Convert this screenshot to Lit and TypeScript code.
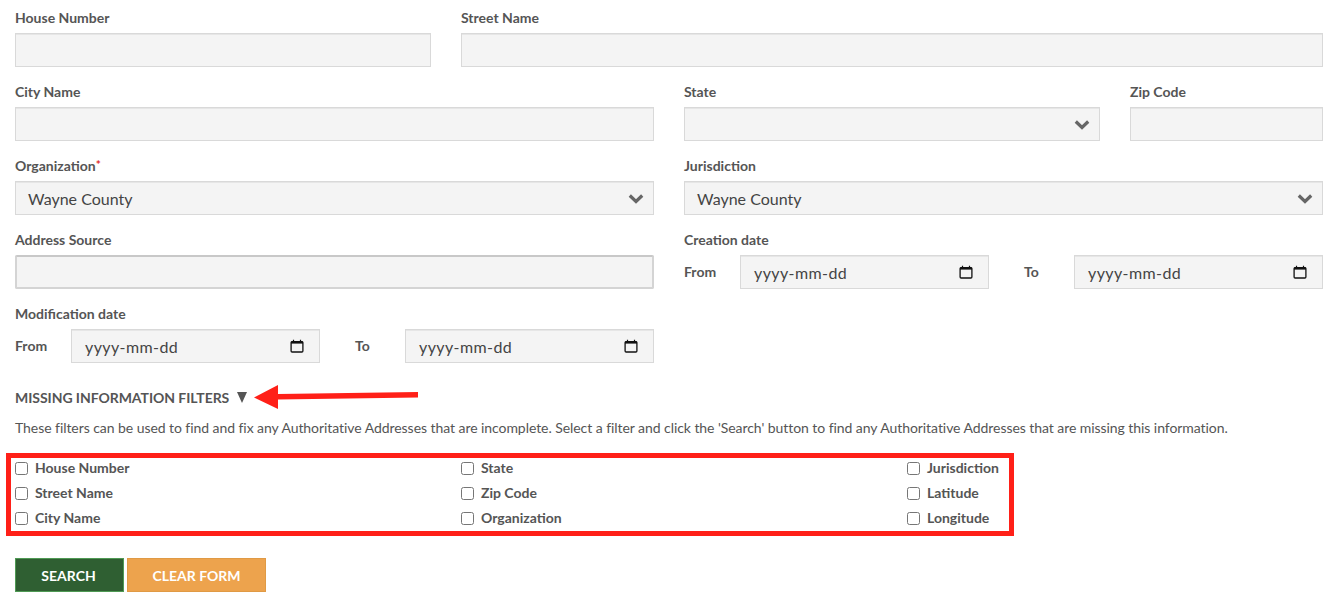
import { LitElement, html, css } from 'lit';
import { customElement } from 'lit/decorators.js';

const chevron = html`<svg class="chevron" width="16" height="11" viewBox="0 0 16 11">
  <path d="M1.8 2.5 L8 8.5 L14.2 2.5" fill="none" stroke="#666" stroke-width="3.2"/>
</svg>`;

const calendar = html`<svg class="cal" width="14" height="14" viewBox="0 0 14 14">
  <rect x="1.1" y="2.6" width="11.8" height="10.4" rx="1" fill="none" stroke="#111" stroke-width="1.3"/>
  <path d="M1 2.4 H13 V4.6 H1 Z" fill="#111"/>
  <path d="M3.5 .8 V3 M10.5 .8 V3" stroke="#111" stroke-width="1.2"/>
</svg>`;

const FILTERS = [
  ['House Number', 'Street Name', 'City Name'],
  ['State', 'Zip Code', 'Organization'],
  ['Jurisdiction', 'Latitude', 'Longitude'],
];

@customElement('app-root')
export class AppRoot extends LitElement {
  static styles = css`
    :host {
      display: block;
      background: #fff;
      color: #555;
      font-family: Lato, "Open Sans", sans-serif;
      height: 600px;
      overflow: hidden;
    }
    .form { padding: 0 10px 0 15px; }
    .grid {
      display: grid;
      grid-template-columns: repeat(6, 193px);
      column-gap: 30px;
    }
    .field { height: 74px; }
    .s1 { grid-column: span 1; }
    .s2 { grid-column: span 2; }
    .s3 { grid-column: span 3; }
    .s4 { grid-column: span 4; }
    .lbl {
      display: block;
      font-size: 14px;
      font-weight: 700;
      line-height: 20px;
      color: #555;
    }
    .field > .lbl { padding-top: 8px; height: 33px; box-sizing: border-box; }
    .req { color: #e02b2b; font-size: 12px; line-height: 0; vertical-align: 2px; }
    .input {
      box-sizing: border-box;
      height: 34px;
      background: #f4f4f4;
      border: 1px solid #d9d9d9;
      box-shadow: inset 0 1px 0 #e6e6e6;
      display: flex;
      align-items: center;
      justify-content: space-between;
      padding: 0 12px;
      font-size: 16px;
      color: #444;
    }
    .inset {
      border: 2px solid #d4d4d4;
      border-top-color: #c8c8c8;
      border-radius: 2px;
      box-shadow: none;
    }
    .chevron { margin-right: -3px; }
    .dates {
      display: grid;
      grid-template-columns: 56px 249px 85px 249px;
      align-items: center;
    }
    .dates .lbl { margin-top: -1px; }
    .date { padding-left: 13px; letter-spacing: 0.4px; }
    .to { padding-left: 35px; }
    .cal { margin-right: 3px; }
    .head {
      display: flex;
      align-items: center;
      font-size: 14px;
      font-weight: 700;
      height: 20px;
      margin-top: 17px;
      letter-spacing: -0.05px;
    }
    .tri {
      width: 0;
      height: 0;
      margin-left: 7.5px;
      border-left: 5.5px solid transparent;
      border-right: 5.5px solid transparent;
      border-top: 11px solid #555;
    }
    .arrow {
      position: absolute;
      left: 254px;
      top: 383px;
    }
    .help {
      font-size: 14px;
      line-height: 20px;
      margin-top: 11px;
      color: #555;
      letter-spacing: -0.06px;
    }
    .filters {
      display: grid;
      grid-template-columns: 446px 446px auto;
      margin-top: 17px;
      height: 75px;
    }
    .box {
      position: absolute;
      left: 6px;
      top: 453px;
      width: 1008px;
      height: 83px;
      box-sizing: border-box;
      border: 5px solid #ff2018;
      pointer-events: none;
    }
    .col { display: flex; flex-direction: column; }
    .check {
      display: flex;
      align-items: center;
      height: 25px;
      font-size: 14px;
      font-weight: 700;
    }
    .check i {
      box-sizing: border-box;
      width: 13px;
      height: 13px;
      border: 1px solid #767676;
      border-radius: 2.5px;
      background: #fff;
      margin: 1px 7px 0 0;
    }
    .buttons { display: flex; gap: 3px; margin-top: 28px; }
    .btn {
      box-sizing: border-box;
      height: 34px;
      display: flex;
      align-items: center;
      justify-content: center;
      color: #fff;
      font-size: 14px;
      font-weight: 700;
    }
    .search { width: 109px; background: #2f5f32; border: 1px solid #4f9a54; padding-right: 2px; }
    .clear { width: 139px; background: #eda34d; border: 1px solid #e09a45; }
  `;

  private _text(label: string, span: string) {
    return html`<div class="field ${span}"><div class="lbl">${label}</div><div class="input"></div></div>`;
  }

  private _select(label: unknown, value: string, span: string) {
    return html`<div class="field ${span}">
      <div class="lbl">${label}</div>
      <div class="input"><span>${value}</span>${chevron}</div>
    </div>`;
  }

  private _dates(label: string) {
    const date = html`<div class="input date"><span>yyyy-mm-dd</span>${calendar}</div>`;
    return html`<div class="field s3">
      <div class="lbl">${label}</div>
      <div class="dates">
        <div class="lbl">From</div>${date}
        <div class="lbl to">To</div>${date}
      </div>
    </div>`;
  }

  render() {
    return html`
      <div class="form">
        <div class="grid">
          ${this._text('House Number', 's2')}
          ${this._text('Street Name', 's4')}
          ${this._text('City Name', 's3')}
          ${this._select('State', '', 's2')}
          ${this._text('Zip Code', 's1')}
          ${this._select(html`Organization<span class="req">*</span>`, 'Wayne County', 's3')}
          ${this._select('Jurisdiction', 'Wayne County', 's3')}
          <div class="field s3"><div class="lbl">Address Source</div><div class="input inset"></div></div>
          ${this._dates('Creation date')}
          ${this._dates('Modification date')}
        </div>
        <div class="head">MISSING INFORMATION FILTERS<span class="tri"></span></div>
        <div class="help">These filters can be used to find and fix any Authoritative Addresses that are incomplete. Select a filter and click the 'Search' button to find any Authoritative Addresses that are missing this information.</div>
        <div class="filters">
          ${FILTERS.map(col => html`<div class="col">
            ${col.map(name => html`<div class="check"><i></i>${name}</div>`)}
          </div>`)}
        </div>
        <div class="buttons">
          <div class="btn search">SEARCH</div>
          <div class="btn clear">CLEAR FORM</div>
        </div>
      </div>
      <svg class="arrow" width="166" height="26" viewBox="0 0 166 26">
        <path d="M0 14.5 L24 2 L24 11 L164 9 L164 14.5 L24 16.5 L24 26 Z" fill="#ff2018"/>
      </svg>
      <div class="box"></div>
    `;
  }
}
